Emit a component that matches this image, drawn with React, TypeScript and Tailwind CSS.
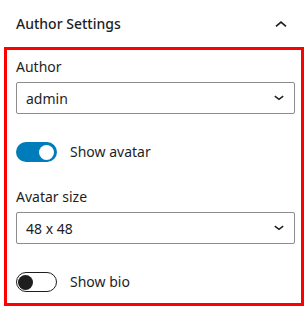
import { useState } from "react";

function ChevronDown() {
  return (
    <svg width="12" height="12" viewBox="0 0 12 12" className="text-[#1e1e1e]">
      <path d="M1.8 4.2L6 7.4l4.2-3.2" fill="none" stroke="currentColor" strokeWidth="1.5" />
    </svg>
  );
}

function Select({ label, value }: { label: string; value: string }) {
  return (
    <div>
      <div className="text-[14px] leading-5 text-[#1e1e1e] mb-[5px]">{label}</div>
      <div className="h-8 flex items-center justify-between border border-[#8c8c8c] rounded-[2px] pl-[9px] pr-[9px]">
        <span className="text-[14px] text-[#1e1e1e]">{value}</span>
        <ChevronDown />
      </div>
    </div>
  );
}

function Toggle({ label, on, onChange }: { label: string; on: boolean; onChange: () => void }) {
  return (
    <button onClick={onChange} className="flex items-center gap-[13px] text-left">
      <span
        className={`w-[41px] h-5 rounded-full flex items-center px-[3px] ${
          on ? "bg-[#007cba] justify-end" : "bg-white border border-[#1e1e1e] justify-start"
        }`}
      >
        <span className={`w-[15px] h-[15px] rounded-full ${on ? "bg-white" : "bg-[#1e1e1e] -ml-[2px]"}`} />
      </span>
      <span className="text-[14px] leading-5 text-[#1e1e1e]">{label}</span>
    </button>
  );
}

export default function App() {
  const [avatar, setAvatar] = useState(true);
  const [bio, setBio] = useState(false);

  return (
    <div className="w-[307px] h-[318px] bg-white" style={{ fontFamily: '"Noto Sans", sans-serif' }}>
      {/* Panel header */}
      <div className="h-[47px] flex items-center justify-between pl-4 pr-[20px]">
        <span className="text-[14px] font-medium text-[#1e1e1e]">Author Settings</span>
        <svg width="12" height="8" viewBox="0 0 12 8" className="text-[#1e1e1e]">
          <path d="M1 6.3L6 2.2l5 4.1" fill="none" stroke="currentColor" strokeWidth="1.7" />
        </svg>
      </div>

      {/* Panel body (highlighted) */}
      <div className="mx-1 w-[300px] h-[259px] border-[3px] border-[#ff0000] pl-[9px] pr-[6px] pt-[7px]">
        <Select label="Author" value="admin" />
        <div className="mt-[28px]">
          <Toggle label="Show avatar" on={avatar} onChange={() => setAvatar(!avatar)} />
        </div>
        <div className="mt-[25px]">
          <Select label="Avatar size" value="48 x 48" />
        </div>
        <div className="mt-[28px]">
          <Toggle label="Show bio" on={bio} onChange={() => setBio(!bio)} />
        </div>
      </div>
    </div>
  );
}
